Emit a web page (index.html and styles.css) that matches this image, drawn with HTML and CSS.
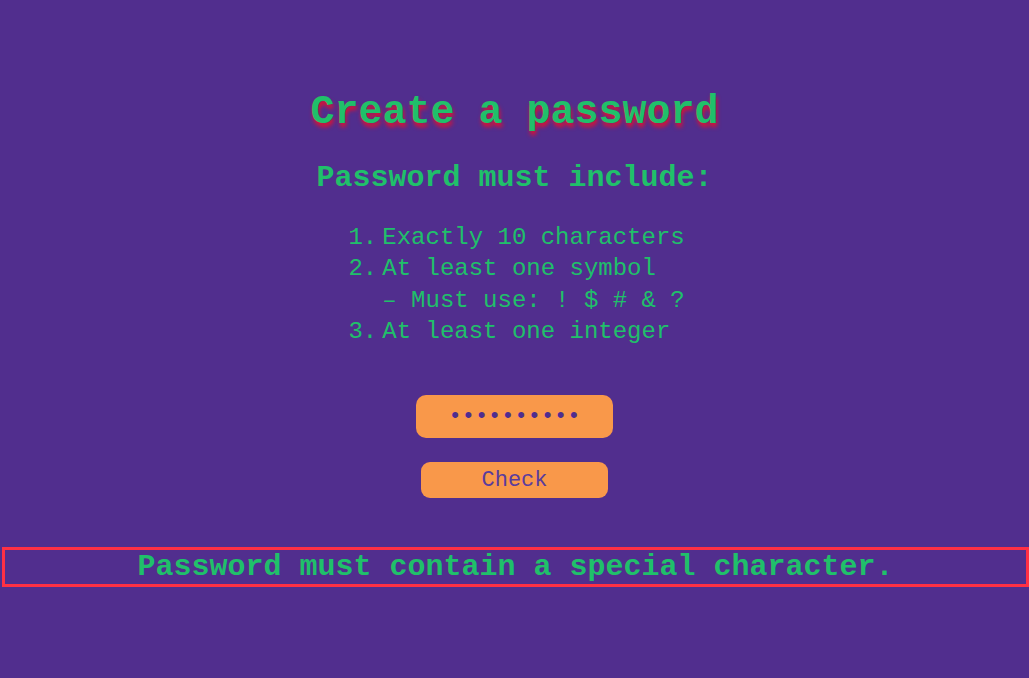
FILE: index.html
```html
<!DOCTYPE html>
<html lang="en">
<head>
<meta charset="utf-8">
<title>Create a password</title>
<link rel="stylesheet" href="styles.css">
</head>
<body>
<main class="page">
  <h1 class="title">Create a password</h1>
  <h2 class="subtitle">Password must include:</h2>
  <ol class="rules">
    <li class="rule">Exactly 10 characters</li>
    <li class="rule">At least one symbol<br>– Must use: ! $ # &amp; ?</li>
    <li class="rule">At least one integer</li>
  </ol>
  <input class="password" type="password" value="abcdefghij">
  <button class="check" type="button">Check</button>
  <p class="error">Password must contain a special character.</p>
</main>
</body>
</html>
```
FILE: styles.css
```css
html, body {
  margin: 0;
  padding: 0;
}

body {
  background: #512e8e;
  color: #20c06a;
  font-family: "Courier New", "Nimbus Mono PS", "Nimbus Mono L", FreeMono, Courier, "Liberation Mono", monospace;
  width: 1029px;
  overflow: hidden;
}

.page {
  display: flex;
  flex-direction: column;
  align-items: center;
  padding-top: 90px;
}

.title {
  margin: 0;
  font-size: 40px;
  line-height: 45px;
  font-weight: bold;
  text-shadow: 1px 4px 4px #e3102e;
}

.subtitle {
  margin: 27px 0 0;
  font-size: 30px;
  line-height: 33px;
  font-weight: bold;
}

.rules {
  margin: 27px 0 0;
  padding: 0 0 0 38px;
  list-style: none;
  counter-reset: rule;
  font-size: 24px;
  line-height: 31.3px;
  text-align: left;
}

.rule {
  counter-increment: rule;
  text-indent: -38px;
}

.rule::before {
  content: counter(rule) ".";
  display: inline-block;
  width: 38px;
  padding-right: 5px;
  box-sizing: border-box;
  text-align: right;
  text-indent: 0;
}

.password {
  margin: 48px 0 0;
  width: 197px;
  height: 43px;
  box-sizing: border-box;
  border: none;
  border-radius: 10px;
  background: #f9984a;
  color: #4f2d8f;
  font-family: inherit;
  font-size: 22px;
  text-align: center;
  padding: 0;
  outline: none;
}

.check {
  margin: 24px 0 0;
  width: 187px;
  height: 36px;
  border: none;
  border-radius: 9px;
  background: #f9984a;
  color: #5a3c9e;
  font-family: inherit;
  font-size: 22px;
  padding: 0;
}

.error {
  align-self: stretch;
  margin: 49px 0 0 2px;
  height: 40px;
  box-sizing: border-box;
  border: 3px solid #ff3044;
  font-size: 30px;
  line-height: 34px;
  font-weight: bold;
  text-align: center;
}
```
